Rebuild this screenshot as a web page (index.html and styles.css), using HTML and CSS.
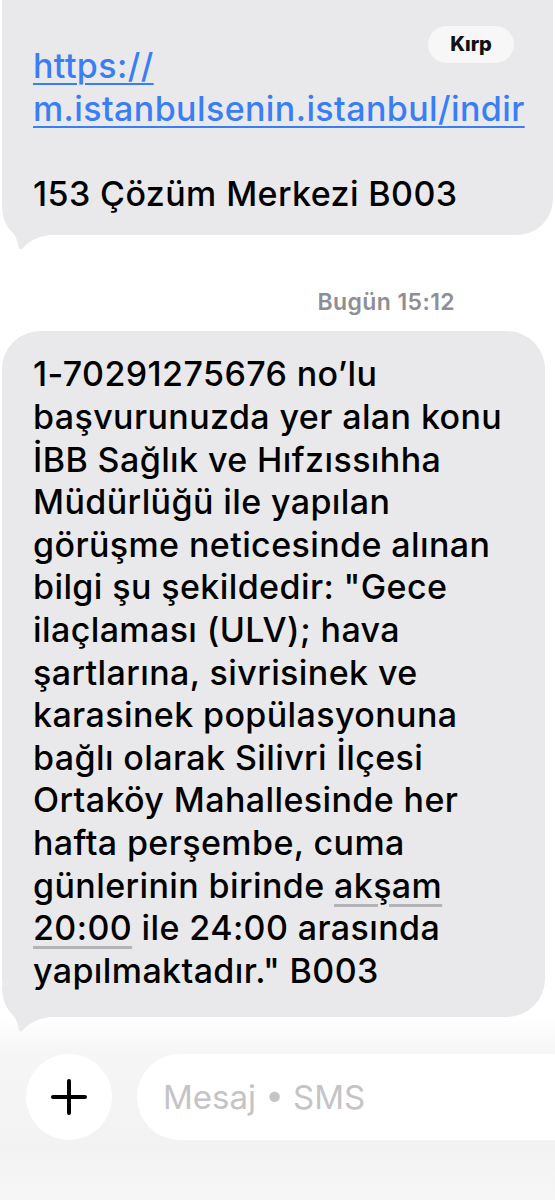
FILE: index.html
```html
<!DOCTYPE html>
<html>
<head>
    <link rel="stylesheet" href="styles.css">
</head>
<body>
    <div class="thread">
        <div class="bubble bubble-top">
            <a class="link" href="#">https://</a><br>
            <a class="link" href="#">m.istanbulsenin.istanbul/indir</a><br>
            <br>
            153 Çözüm Merkezi B003
            <span class="copy-pill">Kırp</span>
            <svg class="tail" viewBox="0 0 50 46">
                <path d="M0 0 C0 14 4 22 10 28 C14 32 16 38 16.5 43 C17 45.5 19 46 20.5 44.5 C26 38 34 33 48 31 L48 0 Z"></path>
            </svg>
        </div>

        <div class="stamp">Bugün 15:12</div>

        <div class="bubble">
            1-70291275676 no’lu<br>
            başvurunuzda yer alan konu<br>
            İBB Sağlık ve Hıfzıssıhha<br>
            Müdürlüğü ile yapılan<br>
            görüşme neticesinde alınan<br>
            bilgi şu şekildedir: "Gece<br>
            ilaçlaması (ULV); hava<br>
            şartlarına, sivrisinek ve<br>
            karasinek popülasyonuna<br>
            bağlı olarak Silivri İlçesi<br>
            Ortaköy Mahallesinde her<br>
            hafta perşembe, cuma<br>
            günlerinin birinde <span class="detect">akşam</span><br>
            <span class="detect">20:00</span> ile 24:00 arasında<br>
            yapılmaktadır." B003
            <svg class="tail" viewBox="0 0 50 46">
                <path d="M0 0 C0 14 4 22 10 28 C14 32 16 38 16.5 43 C17 45.5 19 46 20.5 44.5 C26 38 34 33 48 31 L48 0 Z"></path>
            </svg>
        </div>
    </div>

    <div class="composer">
        <div class="plus-btn">
            <svg width="36" height="36" viewBox="0 0 36 36" fill="none" stroke="#000" stroke-width="4" stroke-linecap="round">
                <line x1="18" y1="2" x2="18" y2="34"></line>
                <line x1="2" y1="18" x2="34" y2="18"></line>
            </svg>
        </div>
        <div class="field">Mesaj • SMS</div>
    </div>
</body>
</html>
```

FILE: styles.css
```css
* {
    box-sizing: border-box;
}

body {
    margin: 0;
    width: 555px;
    height: 1200px;
    overflow: hidden;
    background: #fff;
    font-family: Inter, 'Liberation Sans', sans-serif;
    color: #000;
}

.bubble {
    position: relative;
    isolation: isolate;
    margin: 0 10px 0 2px;
    padding: 22px 0 25px 31px;
    background: #e9e9eb;
    border-radius: 38px;
    font-size: 34px;
    font-weight: 500;
    letter-spacing: 0.4px;
    line-height: 42.6px;
    white-space: nowrap;
}

.bubble-top {
    margin-right: 2px;
    padding-top: 45px;
    padding-bottom: 20px;
    border-radius: 0 0 36px 36px;
}

.tail {
    position: absolute;
    z-index: -1;
    left: 0;
    bottom: -15px;
    width: 50px;
    height: 46px;
    fill: #e9e9eb;
}

.link {
    color: #3a7ef5;
    text-decoration: underline;
    text-decoration-thickness: 2px;
    text-underline-offset: 5px;
}

.copy-pill {
    position: absolute;
    top: 26px;
    right: 39px;
    width: 86px;
    height: 37px;
    border-radius: 19px;
    background: #f7f7f7;
    font-size: 20px;
    font-weight: 800;
    letter-spacing: 0;
    line-height: 37px;
    text-align: center;
    color: #111;
}

.stamp {
    margin: 55px 0 16px;
    padding-right: 100px;
    text-align: right;
    font-size: 23px;
    font-weight: 600;
    letter-spacing: 0.4px;
    line-height: 25px;
    color: #8e8e93;
}

.detect {
    text-decoration: underline;
    text-decoration-color: #b4b4b8;
    text-decoration-thickness: 3px;
    text-underline-offset: 6px;
}

.composer {
    display: flex;
    align-items: center;
    gap: 25px;
    padding: 37px 0 80px 26px;
    background: linear-gradient(#fff 0, #f6f6f6 35px, #f2f2f2 135px, #f9f9f9 100%);
}

.plus-btn {
    flex: none;
    width: 86px;
    height: 86px;
    border-radius: 50%;
    background: #fff;
    display: flex;
    justify-content: center;
    align-items: center;
}

.field {
    flex: 1;
    height: 86px;
    padding-left: 26px;
    border-radius: 43px 0 0 43px;
    background: #fff;
    display: flex;
    align-items: center;
    font-size: 33px;
    color: #c4c4c6;
}
```
